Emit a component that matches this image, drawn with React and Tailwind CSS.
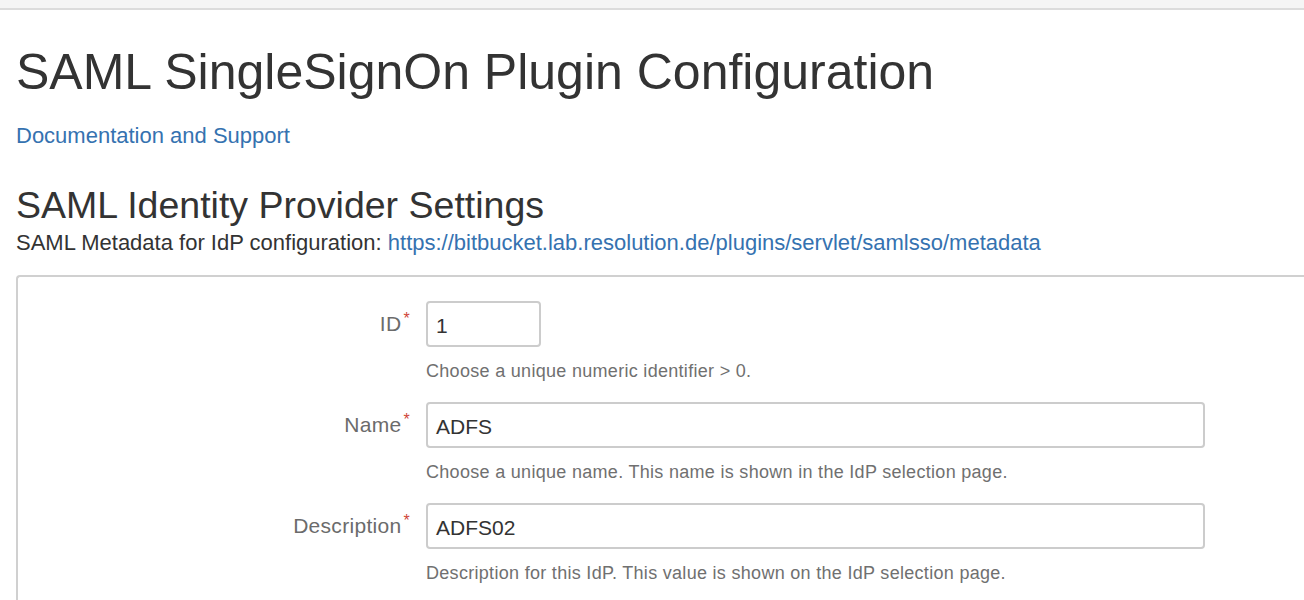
import React from "react";

function Req() {
  return (
    <span className="relative top-[-7px] ml-[2px] text-[16px] leading-none text-[#d04437]">*</span>
  );
}

function Row({ label, value, inputWidth, help }) {
  return (
    <div className="flex">
      <div className="w-[392px] shrink-0 text-right text-[21px] leading-[46px] tracking-[0.3px] text-[#6b6b6b]">
        {label}
        <Req />
      </div>
      <div className="ml-[16px] flex flex-col">
        <div
          className={`${inputWidth} box-border h-[46px] rounded-[4px] border-2 border-[#cccccc] bg-white pl-[8px] pt-[3px] text-[21px] leading-[39px] text-[#333333]`}
        >
          {value}
        </div>
        <div className="mt-[12px] mb-[19px] text-[18px] leading-[24px] tracking-[0.3px] text-[#707070]">
          {help}
        </div>
      </div>
    </div>
  );
}

export default function App() {
  return (
    <div
      className="h-[600px] w-[1304px] overflow-hidden bg-white text-[#333333]"
      style={{ fontFamily: '"Liberation Sans", Arial, Helvetica, sans-serif' }}
    >
      <div className="box-border h-[10px] border-b-2 border-[#dcdcdc] bg-[#f5f5f5]" />
      <div className="pl-[16px]">
        <h1 className="mt-[34px] text-[50px] leading-[56px] font-normal text-[#333333]">
          SAML SingleSignOn Plugin Configuration
        </h1>
        <div className="mt-[23px] text-[22px] leading-[26px] text-[#3572b0]">
          Documentation and Support
        </div>
        <h2 className="mt-[35px] text-[37.5px] leading-[42px] font-normal text-[#333333]">
          SAML Identity Provider Settings
        </h2>
        <div className="mt-[4px] text-[22px] leading-[26px] text-[#333333]">
          SAML Metadata for IdP configuration:{" "}
          <span className="text-[#3572b0]">
            https://bitbucket.lab.resolution.de/plugins/servlet/samlsso/metadata
          </span>
        </div>
        <div className="mt-[19px] h-[400px] rounded-tl-[4px] border-l-2 border-t-2 border-[#d0d0d0] pt-[24px]">
          <Row
            label="ID"
            value="1"
            inputWidth="w-[115px]"
            help="Choose a unique numeric identifier > 0."
          />
          <Row
            label="Name"
            value="ADFS"
            inputWidth="w-[779px]"
            help="Choose a unique name. This name is shown in the IdP selection page."
          />
          <Row
            label="Description"
            value="ADFS02"
            inputWidth="w-[779px]"
            help="Description for this IdP. This value is shown on the IdP selection page."
          />
        </div>
      </div>
    </div>
  );
}
